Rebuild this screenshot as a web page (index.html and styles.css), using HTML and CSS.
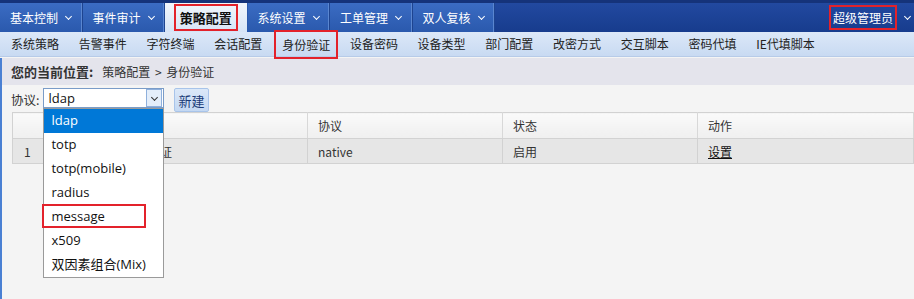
FILE: index.html
```html
<!DOCTYPE html>
<html lang="zh-CN">
<head>
    <meta charset="UTF-8">
    <title>身份验证</title>
    <link rel="stylesheet" href="styles.css">
</head>
<body>
    <div class="topbar">
        <ul class="menu">
            <li class="tab">基本控制 <span class="caret"></span></li>
            <li class="tab">事件审计 <span class="caret"></span></li>
            <li class="tab active"><span class="mark">策略配置</span></li>
            <li class="tab">系统设置 <span class="caret"></span></li>
            <li class="tab">工单管理 <span class="caret"></span></li>
            <li class="tab">双人复核 <span class="caret"></span></li>
        </ul>
        <div class="user"><span class="mark">超级管理员</span> <span class="caret"></span></div>
    </div>

    <div class="subnav">
        <a>系统策略</a>
        <a>告警事件</a>
        <a>字符终端</a>
        <a>会话配置</a>
        <a class="mark">身份验证</a>
        <a>设备密码</a>
        <a>设备类型</a>
        <a>部门配置</a>
        <a>改密方式</a>
        <a>交互脚本</a>
        <a>密码代填</a>
        <a>IE代填脚本</a>
    </div>

    <div class="page">
        <div class="crumb">
            <b>您的当前位置:</b>
            <span>策略配置 &gt; 身份验证</span>
        </div>

        <div class="toolbar">
            <label>协议:</label>
            <div class="select">
                <span class="value">ldap</span>
                <span class="arrow"><span class="caret dark"></span></span>
                <ul class="options">
                    <li class="selected">ldap</li>
                    <li>totp</li>
                    <li>totp(mobile)</li>
                    <li>radius</li>
                    <li><span class="mark">message</span></li>
                    <li>x509</li>
                    <li>双因素组合(Mix)</li>
                </ul>
            </div>
            <button class="btn">新建</button>
        </div>

        <table class="grid">
            <thead>
                <tr>
                    <th class="num"></th>
                    <th class="name">名称</th>
                    <th class="col">协议</th>
                    <th class="col">状态</th>
                    <th>动作</th>
                </tr>
            </thead>
            <tbody>
                <tr>
                    <td class="num">1</td>
                    <td class="name">系统默认本地身份认证</td>
                    <td>native</td>
                    <td>启用</td>
                    <td><a class="link">设置</a></td>
                </tr>
            </tbody>
        </table>
    </div>
</body>
</html>
```

FILE: styles.css
```css
* {
    margin: 0;
    padding: 0;
    box-sizing: border-box;
}

body {
    font-family: "Noto Sans CJK SC", "Noto Sans", sans-serif;
    font-size: 12px;
    color: #333;
    background: #f4f4f4;
    width: 914px;
    height: 299px;
    overflow: hidden;
}

.mark {
    outline: 2px solid #e3222b;
    outline-offset: 1px;
}

.caret {
    display: inline-block;
    width: 5px;
    height: 5px;
    border-right: 1.5px solid #fff;
    border-bottom: 1.5px solid #fff;
    transform: rotate(45deg);
    margin: 0 0 3px 8px;
}

.caret.dark {
    border-color: #333;
    margin: 0 0 2px 0;
}

/* top menu */
.topbar {
    height: 32px;
    display: flex;
    justify-content: space-between;
    background: linear-gradient(#2249a0, #173c8d);
    border-top: 3px solid #15337a;
}

.menu {
    list-style: none;
    display: flex;
}

.tab {
    width: 82.5px;
    height: 29px;
    display: flex;
    align-items: center;
    padding-left: 10px;
    color: #fff;
    font-size: 12px;
    background: linear-gradient(#3b6cc3, #2a59ad);
    border-right: 1px solid #1e4490;
    box-shadow: inset -1px 0 0 #5a86d0;
}

.tab.active {
    justify-content: center;
    padding-left: 0;
    background: linear-gradient(#f2f6fc, #d6e4f6);
    color: #111;
    font-size: 13px;
    font-weight: bold;
    box-shadow: none;
    border-right-color: #2a59ad;
}

.tab.active .mark {
    outline-offset: 2px;
    padding: 0 2px;
}

.user {
    display: flex;
    align-items: center;
    color: #fff;
    font-size: 12px;
    padding-right: 4px;
}

.user .mark {
    outline-offset: 2px;
    margin-right: 4px;
}

/* sub menu */
.subnav {
    height: 25px;
    display: flex;
    align-items: center;
    padding-left: 1px;
    background: linear-gradient(#dce8f8, #c8daf2);
    border-bottom: 1px solid #b7cbe8;
}

.subnav a {
    padding: 0 10px;
    color: #222;
    font-size: 12px;
    line-height: 20px;
}

.subnav a + a {
    margin-left: -0.3px;
}

.subnav a.mark {
    outline-offset: 1px;
    padding: 0 5px;
    margin: 0 5px;
    line-height: 23px;
}

/* page body */
.page {
    border-left: 2px solid #4a80d3;
    height: 242px;
}

.crumb {
    height: 27px;
    display: flex;
    align-items: center;
    gap: 9px;
    padding-left: 9px;
    margin-top: 1px;
    background: #e4e4ec;
    color: #333;
}

.crumb b {
    font-size: 13px;
    color: #333;
}

.crumb span {
    word-spacing: 2px;
}

.toolbar {
    display: flex;
    align-items: flex-start;
    height: 27px;
    padding: 3px 0 0 9px;
}

.toolbar label {
    margin: 2px 4px 0 0;
    font-size: 12.5px;
}

.select {
    position: relative;
    width: 121px;
    height: 20px;
    border: 1px solid #7a9cc8;
    background: #fff;
    display: flex;
    align-items: center;
}

.select .value {
    flex: 1;
    padding-left: 4px;
    font-family: "Open Sans", "Noto Sans", sans-serif;
    font-size: 13px;
    color: #111;
}

.select .arrow {
    width: 16px;
    height: 18px;
    margin-right: 1px;
    border: 1px solid #8fb0dc;
    background: #e4eefa;
    display: flex;
    align-items: center;
    justify-content: center;
}

.options {
    position: absolute;
    top: 19px;
    left: -1px;
    width: 121px;
    list-style: none;
    background: #fff;
    border: 1px solid #9a9a9a;
    z-index: 5;
}

.options li {
    height: 24px;
    line-height: 23px;
    padding-left: 7px;
    font-family: "Open Sans", "Noto Sans", "Noto Sans CJK SC", sans-serif;
    font-size: 13px;
    color: #111;
}

.options li.selected {
    background: #0078d7;
    color: #fff;
}

.options li .mark {
    display: inline-block;
    width: 100px;
    margin-left: -7px;
    padding-left: 7px;
    outline-offset: 0;
    line-height: 20px;
}

.btn {
    margin-left: 10px;
    height: 24px;
    padding: 0 3px;
    border: 1px solid #a8c4ea;
    border-radius: 2px;
    background: linear-gradient(#dbe8f8, #c4d8f2);
    color: #1b3c78;
    font-family: inherit;
    font-size: 13px;
}

/* table */
.grid {
    margin: 0 0 0 10px;
    width: 902px;
    border-collapse: collapse;
    table-layout: fixed;
}

.grid th,
.grid td {
    height: 25px;
    text-align: left;
    font-weight: normal;
    padding-left: 10px;
    border: 1px solid #d2d2d2;
    white-space: nowrap;
    overflow: hidden;
    color: #333;
}

.grid th {
    height: 26px;
    background: linear-gradient(#fafafa, #efefef);
    border-right-color: #d8d8d8;
}

.grid td {
    background: #e6e6e6;
}

.grid .num {
    width: 31px;
    padding-left: 11px;
}

.grid .name {
    width: 264px;
    padding-left: 8px;
}

.grid .col {
    width: 195px;
}

.link {
    color: #111;
    text-decoration: underline;
}
```
